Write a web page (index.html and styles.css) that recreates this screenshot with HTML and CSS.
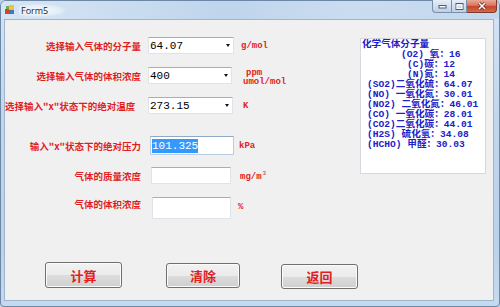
FILE: index.html
```html
<!DOCTYPE html>
<html>
<head>
  <meta charset="utf-8">
  <title>Form5</title>
  <link rel="stylesheet" href="styles.css">
</head>
<body>
<div class="window">

  <div class="titlebar">
    <svg class="app-icon" width="10" height="10" viewBox="0 0 10 10">
      <rect x="0" y="4" width="5" height="5" fill="#d9412b"/>
      <rect x="4" y="0" width="5" height="5" fill="#f2c230"/>
      <rect x="5" y="5" width="4" height="4" fill="#3a78c9"/>
      <rect x="1" y="1" width="3" height="3" fill="#6fb04a"/>
    </svg>
    <span class="title">Form5</span>
    <div class="caption-buttons">
      <span class="cap cap-min">
        <svg width="9" height="5" viewBox="0 0 9 5"><rect x="1" y="1.5" width="7" height="2.5" fill="#fff" stroke="#4a5d72" stroke-width="1"/></svg>
      </span>
      <span class="cap cap-max">
        <svg width="9" height="7" viewBox="0 0 9 7"><rect x="1" y="0.5" width="7" height="6" fill="none" stroke="#4a5d72" stroke-width="1"/><rect x="2" y="2" width="5" height="3.5" fill="none" stroke="#fff" stroke-width="1"/></svg>
      </span>
      <span class="cap cap-close">
        <svg width="10" height="8" viewBox="0 0 10 8"><path d="M2 1 L8 7 M8 1 L2 7" stroke="#6b2418" stroke-width="3"/><path d="M2 1 L8 7 M8 1 L2 7" stroke="#fff" stroke-width="1.6"/></svg>
      </span>
    </div>
  </div>

  <div class="client">
    <div class="top">

      <div class="form">
        <div class="row r1">
          <span class="lbl">选择输入气体的分子量</span>
          <div class="combo c1"><span class="val">64.07</span><i class="arrow"></i></div>
          <span class="unit u1">g/mol</span>
        </div>
        <div class="row r2">
          <span class="lbl">选择输入气体的体积浓度</span>
          <div class="combo c2"><span class="val">400</span><i class="arrow"></i></div>
          <span class="unit u2"><span class="ppm">ppm</span><span>umol/mol</span></span>
        </div>
        <div class="row r3">
          <span class="lbl lbl-r3">选择输入"x"状态下的绝对温度</span>
          <div class="combo c3"><span class="val">273.15</span><i class="arrow"></i></div>
          <span class="unit u3">K</span>
        </div>
        <div class="row r4">
          <span class="lbl">输入"x"状态下的绝对压力</span>
          <div class="textbox t4 focused"><span class="sel">101.325</span></div>
          <span class="unit u4">kPa</span>
        </div>
        <div class="row r5">
          <span class="lbl">气体的质量浓度</span>
          <div class="textbox t5"></div>
          <span class="unit u5">mg/m<sup>3</sup></span>
        </div>
        <div class="row r6">
          <span class="lbl lbl-r6">气体的体积浓度</span>
          <div class="textbox t6"></div>
          <span class="unit u6">%</span>
        </div>
      </div>

      <div class="panel">
        <div class="ln">化学气体分子量</div>
        <div class="ln in-o2">(O2) 氧：16</div>
        <div class="ln in-c">(C)碳：12</div>
        <div class="ln in-c">(N)氮：14</div>
        <div class="ln in">(SO2)二氧化硫：64.07</div>
        <div class="ln in">(NO) 一氧化氮：30.01</div>
        <div class="ln in">(NO2) 二氧化氮：46.01</div>
        <div class="ln in">(CO) 一氧化碳：28.01</div>
        <div class="ln in">(CO2)二氧化碳：44.01</div>
        <div class="ln in">(H2S) 硫化氢：34.08</div>
        <div class="ln in">(HCHO) 甲醛：30.03</div>
      </div>

    </div>

    <div class="buttons">
      <button class="btn b1">计算</button>
      <button class="btn b2">清除</button>
      <button class="btn b3">返回</button>
    </div>
  </div>

</div>
</body>
</html>
```

FILE: styles.css
```css
html, body {
  margin: 0;
  height: 100%;
}
body {
  background: #bcd3eb;
  overflow: hidden;
}

.window {
  width: 500px;
  height: 307px;
  box-sizing: border-box;
  border: 1px solid #6d88a6;
  border-radius: 6px 6px 4px 4px;
  background: linear-gradient(to bottom, #d4e4f4 0%, #c0d6ed 40%, #bad2ea 80%, #c6daef 100%);
  display: flex;
  flex-direction: column;
}

/* title bar */
.titlebar {
  height: 18px;
  display: flex;
  align-items: center;
  background: linear-gradient(to right, #d6e5f4 0%, #c7dbef 30%, #bfd5ec 45%, #cadcf0 70%, #c3d8ee 100%);
  border-radius: 5px 5px 0 0;
}
.app-icon {
  margin-left: 4px;
  margin-top: -1px;
}
.title {
  margin-left: 4px;
  padding: 0 18px 0 2px;
  font-family: "Open Sans", "Noto Sans", sans-serif;
  font-size: 9px;
  color: #1b1b1b;
  background: radial-gradient(ellipse at 40% 50%, rgba(255,255,255,0.85) 0%, rgba(255,255,255,0.4) 55%, rgba(255,255,255,0) 75%);
}
.caption-buttons {
  margin-left: auto;
  margin-right: 2px;
  align-self: flex-start;
  display: flex;
  margin-top: -1px;
}
.cap {
  height: 13px;
  box-sizing: border-box;
  display: flex;
  align-items: center;
  justify-content: center;
  border: 1px solid #7a8fa8;
  border-top: none;
}
.cap-min {
  width: 19px;
  border-radius: 0 0 0 4px;
  border-right: none;
  background: linear-gradient(to bottom, #e6eef8 0%, #d2dfee 50%, #bccfe4 100%);
}
.cap-max {
  width: 16px;
  background: linear-gradient(to bottom, #e6eef8 0%, #d2dfee 50%, #bccfe4 100%);
}
.cap-close {
  width: 30px;
  border-left: none;
  border-color: #7a3a2c;
  border-radius: 0 0 4px 0;
  background: linear-gradient(to bottom, #e9a998 0%, #d8745d 45%, #c8452c 55%, #d46a4c 100%);
}

/* client area */
.client {
  flex: 1;
  margin: 0 5px 5px 3px;
  background: #f0f0f0;
  border: 1px solid #9fb5cd;
  display: flex;
  flex-direction: column;
}
.top {
  display: flex;
  align-items: flex-start;
}

.form {
  width: 355px;
}
.row {
  display: flex;
  align-items: center;
}
.r1 { margin-top: 17px; height: 17px; }
.r2 { margin-top: 13px; height: 17px; }
.r3 { margin-top: 13px; height: 17px; }
.r4 { margin-top: 22px; height: 19px; }
.r5 { margin-top: 12px; height: 17px; }
.r6 { margin-top: 13px; height: 22px; }

.lbl {
  width: 136px;
  flex: none;
  text-align: right;
  font-family: "Noto Sans CJK SC", sans-serif;
  font-weight: bold;
  font-size: 9.5px;
  color: #e01e1e;
  white-space: nowrap;
}
.lbl-r3 {
  padding-right: 6px;
  box-sizing: border-box;
}
.lbl-r6 {
  align-self: flex-start;
  margin-top: 0px;
}

.combo, .textbox {
  height: 100%;
  box-sizing: border-box;
  background: #fff;
  border: 1px solid #dfe3ea;
  border-top-color: #abadb3;
  display: flex;
  align-items: center;
  font-family: "Liberation Mono", monospace;
  font-size: 11px;
  color: #000;
}
.combo {
  margin-left: 7px;
  justify-content: space-between;
}
.c1 { width: 86px; }
.c2 { width: 84px; }
.c3 { width: 85px; }
.val {
  padding-left: 1px;
}
.arrow {
  width: 0;
  height: 0;
  margin-right: 3px;
  border-top: 3px solid #111;
  border-left: 2.5px solid transparent;
  border-right: 2.5px solid transparent;
}

.t4 { margin-left: 9px; width: 84px; }
.t5 { margin-left: 10px; width: 80px; }
.t6 { margin-left: 11px; width: 79px; }
.focused {
  border-color: #b9cde3;
  border-top-color: #8fa9c6;
}
.sel {
  margin-left: 1px;
  background: #3399ff;
  color: #fff;
  line-height: 14px;
}

.unit {
  font-family: "Liberation Mono", monospace;
  font-weight: bold;
  font-size: 9px;
  color: #e01e1e;
}
.u1 { margin-left: 7px; }
.u2 {
  margin-left: 11px;
  margin-top: 5px;
  display: flex;
  flex-direction: column;
  line-height: 9px;
}
.ppm { padding-left: 3px; }
.u3 { margin-left: 10px; }
.u4 { margin-left: 5px; }
.u5 { margin-left: 9px; }
.u5 sup {
  font-size: 6px;
  font-weight: normal;
  vertical-align: 4px;
  margin-left: 1px;
}
.u6 { margin-left: 7px; margin-top: -3px; }

/* molecular weight list */
.panel {
  width: 126px;
  height: 136px;
  margin-top: 18px;
  box-sizing: border-box;
  background: #fff;
  border: 1px solid #d5d9df;
  padding: 1px 0 0 1px;
  font-family: "Liberation Mono", "Noto Sans CJK SC", monospace;
  font-weight: bold;
  font-size: 9.6px;
  line-height: 10px;
  color: #2020c8;
  white-space: nowrap;
}
.in-o2 { padding-left: 39px; }
.in-c { padding-left: 45px; }
.in { padding-left: 5px; }

/* bottom buttons */
.buttons {
  margin-top: 43px;
  padding-left: 40px;
  display: flex;
  align-items: flex-start;
}
.btn {
  height: 26px;
  margin: 0;
  padding: 0;
  border: 1px solid #707070;
  border-radius: 3px;
  background: linear-gradient(to bottom, #f2f2f2 0%, #ebebeb 50%, #dddddd 51%, #cfcfcf 100%);
  box-shadow: inset 0 0 0 1px #fbfbfb;
  font-family: "Noto Sans CJK SC", sans-serif;
  font-weight: bold;
  font-size: 13px;
  color: #e01e1e;
}
.b1 { width: 77px; }
.b2 { width: 74px; height: 25px; margin-left: 44px; margin-top: 1px; }
.b3 { width: 77px; height: 25px; margin-left: 41px; margin-top: 2px; }
```
